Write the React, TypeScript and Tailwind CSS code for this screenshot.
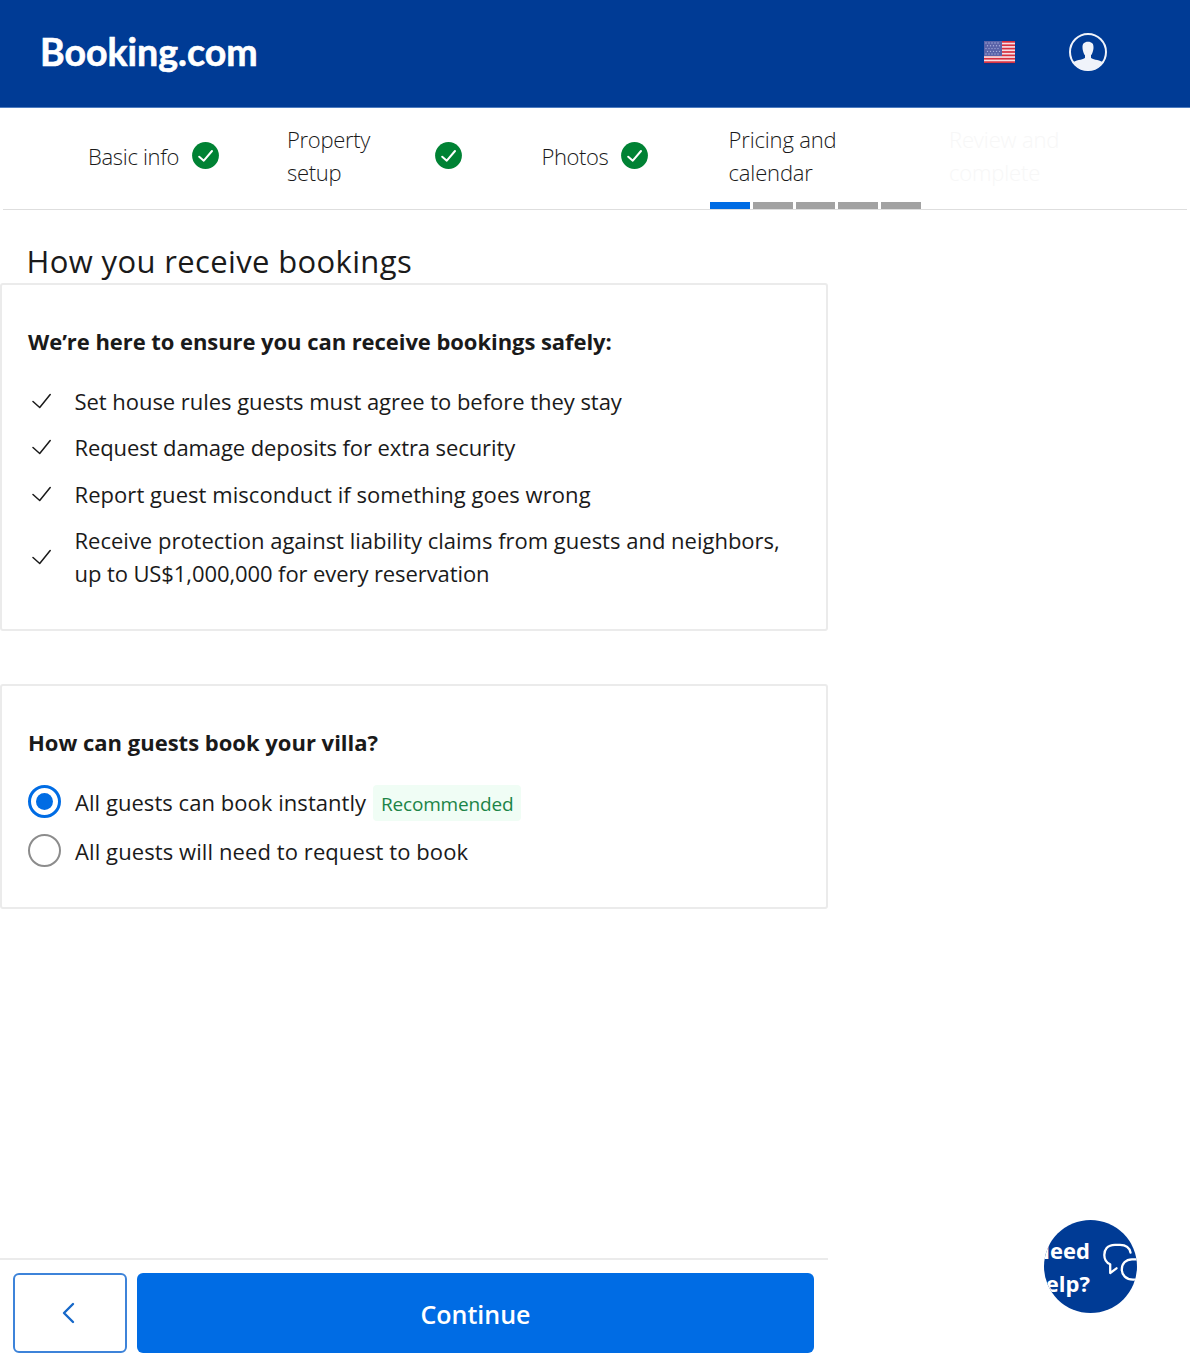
import React from "react";

const stripes = [0, 2, 4, 6, 8, 10, 12];

function Flag() {
  return (
    <svg width="31" height="24" viewBox="0 0 31 24" className="relative top-px block">
      <rect x="0" y="1" width="31" height="22.500" fill="#1c2f78" opacity="0.6" />
      <rect width="31" height="22" fill="#f6dfe5" />
      {stripes.map((s) => (
        <rect key={s} y={s * 1.69} width="31" height="1.69" fill="#d8303f" />
      ))}
      <rect width="18" height="15" fill="#5a63a8" />
      {[2, 4.8, 7.6, 10.4, 13].map((y, r) =>
        [2, 5, 8, 11, 14].map((x) => (
          <circle key={`${x}-${y}`} cx={x + (r % 2) * 1.5} cy={y} r="0.7" fill="#aab0dc" />
        ))
      )}
    </svg>
  );
}

function Avatar() {
  return (
    <svg width="38" height="38" viewBox="0 0 38 38" className="block">
      <defs>
        <clipPath id="avatar-clip">
          <circle cx="19" cy="19" r="18.5" />
        </clipPath>
      </defs>
      <circle cx="19" cy="19" r="18" fill="none" stroke="#f0f3fa" strokeWidth="2" />
      <path
        clipPath="url(#avatar-clip)"
        fill="#f0f3fa"
        d="M19 8.800c-3.900 0-5.700 2.200-5.500 5.700 0 1 .1 2 .4 2.900.5 2.300 1.100 3.700 2.100 4.900v2.400c-.6 1.800-7.500 1.800-11.500 4.300l-2 9h33l-2-9c-4-2.500-10.900-2.500-11.500-4.300v-2.400c1-1.200 1.600-2.600 2.100-4.900.3-.9.4-1.900.4-2.900.2-3.500-1.600-5.700-5.500-5.700z"
      />
    </svg>
  );
}

function DoneBadge() {
  return (
    <svg width="27" height="27" viewBox="0 0 27 27" className="relative -top-px block shrink-0">
      <circle cx="13.500" cy="13.500" r="13.400" fill="#008234" />
      <path d="M7.200 14.700 11.800 18.700 20 9" fill="none" stroke="#fff" strokeWidth="2" strokeLinecap="round" strokeLinejoin="round" />
    </svg>
  );
}

function Tick() {
  return (
    <svg width="20" height="17" viewBox="0 0 20 17" className="block shrink-0">
      <path d="M2 8.500 8.700 14.500 19.200 1.500" fill="none" stroke="#1a1a1a" strokeWidth="1.500" strokeLinecap="round" strokeLinejoin="round" />
    </svg>
  );
}

const rules = [
  { text: "Set house rules guests must agree to before they stay", tracking: "tracking-[-0.04px]" },
  { text: "Request damage deposits for extra security", tracking: "tracking-[-0.09px]" },
  { text: "Report guest misconduct if something goes wrong", tracking: "tracking-[0.06px]" },
];

const progress = ["bg-[#006ce4]", "bg-[#a2a2a2]", "bg-[#a2a2a2]", "bg-[#a2a2a2]", "bg-[#a2a2a2]"];

export default function App() {
  return (
    <div className="relative flex h-[1365px] w-[1190px] flex-col overflow-hidden bg-white font-['Open_Sans',sans-serif] text-[#1a1a1a]">
      <header className="flex h-[108px] shrink-0 items-center border-b border-[#4d7cc0] bg-[#003b95] pl-[40px] pr-[83px]">
        <span className="mt-[-4px] whitespace-nowrap font-['Lato',sans-serif] text-[37.5px] font-bold leading-none text-white [-webkit-text-stroke:0.6px_white]">Booking.com</span>
        <div className="ml-auto mt-[-3px] flex items-center gap-[54px]">
          <Flag />
          <Avatar />
        </div>
      </header>
      <nav className="mx-[3px] flex h-[102px] shrink-0 border-b border-[#dedede] text-[22px] font-light leading-[33px]">
        <div className="flex w-[236px] items-center gap-[13px] pb-[5px] pl-[85px]"><span className="whitespace-nowrap tracking-[-0.32px]">Basic info</span><DoneBadge /></div>
        <div className="flex w-[250px] items-center pb-[5px] pl-12"><div className="w-[148px] tracking-[-0.3px]">Property<br />setup</div><DoneBadge /></div>
        <div className="flex w-[221px] items-center gap-[13px] pb-[5px] pl-[52.5px]"><span className="tracking-[-0.4px]">Photos</span><DoneBadge /></div>
        <div className="flex w-[221px] flex-col justify-end">
          <div className="mb-[13px] pl-[18.5px] tracking-[-0.15px]">Pricing and<br />calendar</div>
          <div className="flex h-[7px] w-[211px] gap-[3px]">
            {progress.map((c, i) => <div key={i} className={`flex-1 ${c}`} />)}
          </div>
        </div>
        <div className="flex items-center pb-[5px] pl-[18px] tracking-[-0.15px] text-[#f7f7f7]"><div>Review and<br />complete</div></div>
      </nav>
      <main className="w-[828px]">
        <h1 className="flex h-[73px] items-end pl-[26.5px] text-[31px] leading-[43px] tracking-[0.36px]">How you receive bookings</h1>
        <section className="h-[348px] rounded-[3px] border-2 border-[#ebebeb] pl-[26px] pt-10 text-[22px]">
          <h2 className="font-bold leading-[33px] tracking-[-0.06px]">We’re here to ensure you can receive bookings safely:</h2>
          <ul className="mt-[27px] flex flex-col gap-[13.4px] leading-[33px]">
            {rules.map((r) => <li key={r.text} className="flex items-center gap-6 pl-[2.5px]"><Tick /><span className={r.tracking}>{r.text}</span></li>)}
            <li className="flex items-center gap-6 pl-[2.5px]">
              <Tick />
              <div className="whitespace-nowrap">
                <div>Receive protection against liability claims from guests and neighbors,</div>
                <div className="tracking-[-0.09px]">up to US$1,000,000 for every reservation</div>
              </div>
            </li>
          </ul>
        </section>
        <section className="mt-[53px] h-[225px] rounded-[3px] border-2 border-[#ebebeb] pl-[26px] pt-10 text-[22px]">
          <h2 className="leading-[33px] font-bold">How can guests book your villa?</h2>
          <div className="mt-[25px] flex h-[36px] items-center">
            <div className="mb-[2px] flex size-[33px] items-center justify-center rounded-full border-[3px] border-[#006ce4]"><div className="size-[17px] rounded-full bg-[#006ce4]" /></div>
            <span className="ml-[14px] whitespace-nowrap tracking-[0.05px]">All guests can book instantly</span>
            <span className="ml-[7px] mt-[2px] flex h-9 w-[148px] items-center justify-center rounded bg-[#f0fdf5] pt-[2px] text-[19px] tracking-[-0.18px] text-[#1c8447]">Recommended</span>
          </div>
          <div className="mt-3 flex h-[36px] items-center">
            <div className="size-[33px] rounded-full border-2 border-[#8c8c8c]" />
            <span className="ml-[14px] mt-[2px] tracking-[0.09px]">All guests will need to request to book</span>
          </div>
        </section>
      </main>
      <footer className="mt-auto flex h-[107px] w-[827.5px] gap-[10px] border-t-2 border-[#ebebeb] pb-[12.5px] pl-[13px] pr-[13.5px] pt-[13px]">
        <button className="flex w-[114px] items-center justify-center rounded-md border-2 border-[#3d83d9] pr-[3px]">
          <svg width="14" height="22" viewBox="0 0 14 22"><path d="M11 2 2 11 11 20" fill="none" stroke="#1668c9" strokeWidth="2.400" strokeLinecap="round" strokeLinejoin="round" /></svg>
        </button>
        <button className="flex-1 rounded-md bg-[#006ce4] pt-[4px] text-[25px] font-semibold text-white">Continue</button>
      </footer>
      <div className="absolute left-[1044px] top-[1220px] size-[93px] overflow-hidden rounded-full bg-[#003b95] text-[22px] font-bold leading-[33px] text-white">
        <div className="absolute right-[47px] top-[14px] whitespace-nowrap text-right">Need<br />Help?</div>
        <svg className="absolute left-[58px] top-[22px]" width="35" height="42" viewBox="0 0 35 42" fill="none" stroke="#fff" strokeWidth="2.300" strokeLinecap="round" strokeLinejoin="round"><path d="M28.500 10.500C27.500 5.500 24 2.800 18 2.800H13C5 2.800 2.300 8 2.300 13C2.300 17.500 4 20.500 8.200 22.300V31L14.500 26.300M37 17.300H30C23.500 17.300 19.800 22 19.800 27.500S24 37.600 31 37.600H37" /></svg>
      </div>
    </div>
  );
}
